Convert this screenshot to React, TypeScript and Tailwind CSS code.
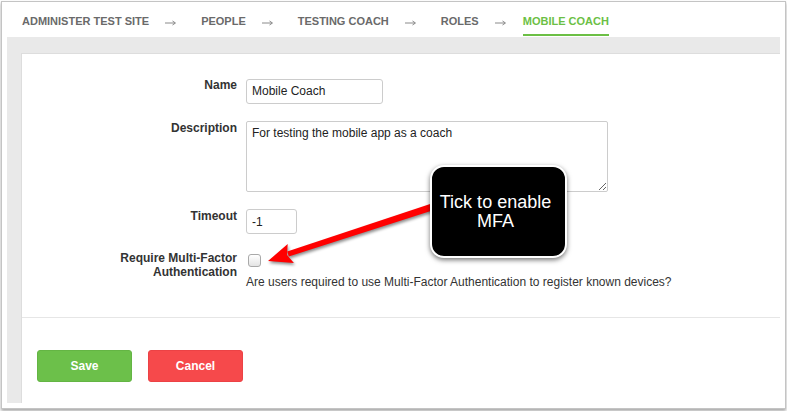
import React from 'react';

const crumbs = ['ADMINISTER TEST SITE', 'PEOPLE', 'TESTING COACH', 'ROLES'];

function CrumbArrow() {
    return (
        <svg width="11" height="6" viewBox="0 0 11 6" className="mt-[6px]">
            <path d="M0 3H10" stroke="#8a8a8a" strokeWidth="1" />
            <path d="M7.5 1L10.5 3L7.5 5" stroke="#8a8a8a" strokeWidth="1" fill="none" />
        </svg>
    );
}

function Field({ label, children }: { label: React.ReactNode; children: React.ReactNode }) {
    return (
        <>
            <div className="text-right font-bold text-[12px] leading-[14px] text-[#333]">{label}</div>
            <div>{children}</div>
        </>
    );
}

export default function App() {
    return (
        <div className="w-[787px] h-[411px] bg-white pt-[1px] pl-[1px] relative font-['Liberation_Sans',Arial,sans-serif]">
            <div className="w-[785px] h-[408px] border border-[#c4c4c4] shadow-[0_2px_3px_rgba(0,0,0,0.35)] flex flex-col">
                {/* breadcrumb */}
                <div className="h-[35px] pl-[20px] pt-[12px] flex items-start text-[11px] leading-[14px] font-bold text-[#6a6a6a]">
                    {crumbs.map((c) => (
                        <React.Fragment key={c}>
                            <span>{c}</span>
                            <span className="ml-[16px] mr-[25px]">
                                <CrumbArrow />
                            </span>
                        </React.Fragment>
                    ))}
                    <span className="-ml-[8px] text-[#6cbf45] border-b-2 border-[#6cbf45] pb-[6px]">MOBILE COACH</span>
                </div>

                {/* grey panel */}
                <div className="flex-1 mx-[5px] mb-[5px] bg-[#e9e9e9] pl-[14px] pt-[16px] flex">
                    <div className="flex-1 bg-white border-l border-t border-[#dddddd] flex flex-col">
                        <div className="pt-[24px] pb-[28px] grid grid-cols-[215px_1fr] gap-x-[9px] gap-y-[17px]">
                            <Field label="Name">
                                <input
                                    defaultValue="Mobile Coach"
                                    className="w-[137px] h-[25px] border border-[#cccccc] rounded-[3px] px-[5px] text-[12px] text-[#222] outline-none"
                                />
                            </Field>
                            <Field label="Description">
                                <textarea
                                    defaultValue="For testing the mobile app as a coach"
                                    className="block w-[362px] h-[71px] border border-[#cccccc] rounded-[2px] px-[5px] pt-[4px] text-[12px] leading-[14px] text-[#222] outline-none"
                                />
                            </Field>
                            <Field label="Timeout">
                                <input
                                    defaultValue="-1"
                                    className="w-[51px] h-[25px] border border-[#cccccc] rounded-[3px] px-[5px] text-[12px] text-[#222] outline-none"
                                />
                            </Field>
                            <Field
                                label={
                                    <>
                                        Require Multi-Factor
                                        <br />
                                        Authentication
                                    </>
                                }
                            >
                                <input
                                    type="checkbox"
                                    className="appearance-none block ml-[2px] mt-[3px] w-[13px] h-[13px] border border-[#a9a9a9] rounded-[3px] bg-linear-to-b from-white to-[#e4e4e4]"
                                />
                                <p className="mt-[8px] text-[12px] leading-[14px] text-[#333]">
                                    Are users required to use Multi-Factor Authentication to register known devices?
                                </p>
                            </Field>
                        </div>

                        <div className="border-t border-[#e6e6e6] pt-[32px] pl-[15px] flex gap-[16px]">
                            <button className="w-[95px] h-[32px] rounded-[3px] bg-[#6cc04a] border border-[#64b544] text-white font-bold text-[12px]">
                                Save
                            </button>
                            <button className="w-[95px] h-[32px] rounded-[3px] bg-[#f6494b] border border-[#ec4245] text-white font-bold text-[12px]">
                                Cancel
                            </button>
                        </div>
                    </div>
                </div>
            </div>

            {/* annotation arrow */}
            <svg
                width="787"
                height="411"
                className="absolute left-0 top-0 pointer-events-none"
                style={{ filter: 'drop-shadow(1px 2px 1.5px rgba(0,0,0,0.45))' }}
            >
                <polygon points="288.8,256.4 287.2,251.6 430.9,203.7 433.1,210.3" fill="#ff0000" />
                <polygon points="268,261 293.9,263.1 287,254.9 287.7,244.1" fill="#ff0000" />
            </svg>

            {/* callout */}
            <div className="absolute left-[430px] top-[165px] w-[137px] h-[93px] bg-black border-2 border-white rounded-[14px] shadow-[0_2px_5px_rgba(0,0,0,0.55)] flex items-center justify-center">
                <p className="text-white text-[18px] leading-[19px] text-center -ml-[6px]">
                    Tick to enable
                    <br />
                    MFA
                </p>
            </div>
        </div>
    );
}
